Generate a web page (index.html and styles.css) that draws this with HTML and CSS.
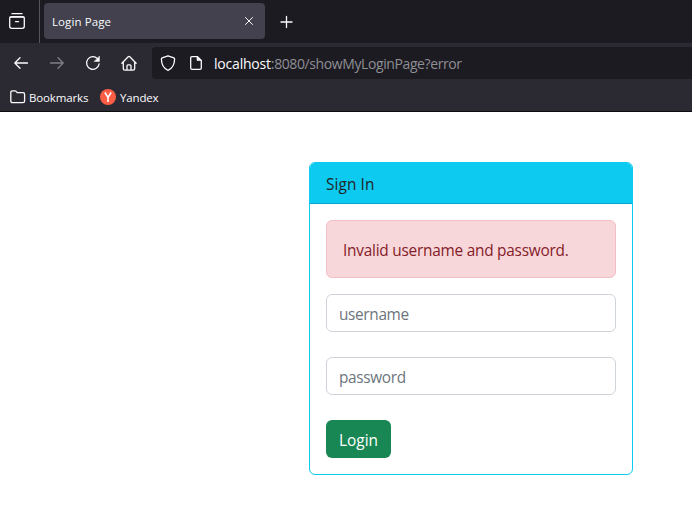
FILE: index.html
```html
<!DOCTYPE html>
<html lang="en">
<head>
<meta charset="utf-8">
<title>Login Page</title>
<link rel="stylesheet" href="styles.css">
</head>
<body>
<header class="browser">
  <div class="tabs">
    <div class="view">
      <svg class="icon" width="18" height="18" viewBox="0 0 18 18"><path d="M4 1.700h10"/><rect x="1.700" y="4.600" width="14.600" height="11.700" rx="2"/><path d="M2 5.200h14M7.500 9.600h3"/></svg>
    </div>
    <div class="tab"><span class="tab-title">Login Page</span>
      <svg class="icon thin" width="10" height="10" viewBox="0 0 10 10"><path d="M1.500 1.500l7 7M8.500 1.500l-7 7"/></svg>
    </div>
    <svg class="icon plus" width="14" height="14" viewBox="0 0 14 14"><path d="M6.500 1.500v11M1 7h11"/></svg>
  </div>
  <nav class="toolbar">
    <div class="buttons">
      <svg class="icon" width="16" height="16" viewBox="0 0 16 16"><path d="M14.500 8H1.800M7 2.800L1.800 8 7 13.200"/></svg>
      <svg class="icon dim" width="16" height="16" viewBox="0 0 16 16"><path d="M1.500 8h12.700M9 2.800L14.200 8 9 13.200"/></svg>
      <svg class="icon" width="16" height="16" viewBox="0 0 16 16"><path d="M12.400 3.600A6.300 6.300 0 1 0 14.100 9"/><path class="solid" d="M14.400 1.500v4.900H9.500z"/></svg>
      <svg class="icon" width="16" height="16" viewBox="0 0 16 16"><path d="M.9 8.200L7.200 1.700q.8-.7 1.600 0l6.300 6.500M2.300 7v6.400q0 1.700 1.700 1.700h8q1.700 0 1.700-1.700V7M6 15v-4.100q0-1 1-1h2q1 0 1 1V15"/></svg>
    </div>
    <div class="address">
      <svg class="icon" width="16" height="16" viewBox="0 0 16 16"><path d="M8 .8l5.900 2.100q.7.300.7 1.100C14.500 9.600 12.500 13.400 8 15.300 3.500 13.400 1.500 9.600 1.400 4q0-.8.700-1.100z"/></svg>
      <svg class="icon page" width="14" height="16" viewBox="0 0 14 16"><path d="M8.500 1.700H3q-1.300 0-1.300 1.300v10q0 1.300 1.300 1.300h8q1.300 0 1.300-1.300V5.500z"/><path class="solid" d="M8 1.500v4h4.200z"/></svg>
      <span class="url"><b>localhost</b>:8080/showMyLoginPage?error</span>
    </div>
  </nav>
  <div class="bookmarks">
    <svg class="icon folder" width="16" height="14" viewBox="0 0 16 14"><path d="M.8 11V2.500Q.8.800 2.500.800H5q.7 0 1.100.600L7.200 2.700H13Q14.600 2.700 14.600 4.400V11q0 1.700-1.600 1.700H2.500Q.8 12.700.8 11z"/></svg>
    <span class="mark-text first">Bookmarks</span>
    <svg width="16" height="16" viewBox="0 0 16 16"><circle cx="8" cy="8" r="8" fill="#fc5d45"/><path d="M4.900 3.500L8 8.500l3.100-5M8 8v5" fill="none" stroke="#fff" stroke-width="1.600"/></svg>
    <span class="mark-text second">Yandex</span>
  </div>
</header>
<main class="content">
  <section class="card">
    <div class="card-header"><span class="heading">Sign In</span></div>
    <form class="card-body">
      <div class="alert"><span class="message">Invalid username and password.</span></div>
      <input class="field user" type="text" placeholder="username">
      <input class="field pass" type="password" placeholder="password">
      <button class="login" type="button">Login</button>
    </form>
  </section>
</main>
</body>
</html>
```
FILE: styles.css
```css
* { box-sizing: border-box; }
body {
  margin: 0;
  height: 513px;
  overflow: hidden;
  background: #fff;
  font-family: "Open Sans", "Noto Sans", sans-serif;
}
svg { display: block; flex: none; }
.icon { fill: none; stroke: #fbfbfe; stroke-width: 1.3; stroke-linecap: round; stroke-linejoin: round; }
.icon .solid { fill: #fbfbfe; stroke-width: .6; }
.icon.thin { stroke-width: 1; }
.dim { opacity: .4; }
.browser { height: 112px; background: #2b2a33; border-bottom: 1px solid #0c0c0d; color: #fbfbfe; white-space: nowrap; }
.tabs { height: 43px; display: flex; background: #1c1b22; }
.view { width: 40px; height: 43px; padding: 12px 0 0 8px; border-right: 1px solid #55545c; }
.tab {
  width: 221px; height: 36px; margin: 3px 0 0 4px; padding: 0 11px 0 8px;
  display: flex; align-items: center; justify-content: space-between;
  background: #42414d; border-radius: 4px;
}
.tab-title { font-size: 11.5px; letter-spacing: .1px; }
.plus { margin: 15px 0 0 15px; }
.toolbar { height: 40px; display: flex; }
.buttons { width: 152px; padding: 12px 0 0 13px; display: flex; gap: 20px; }
.address { flex: 1; height: 32px; margin-top: 4px; padding-left: 8px; display: flex; align-items: center; background: #1c1b22; border-radius: 4px 0 0 4px; }
.page { margin-left: 13px; }
.url { margin: 0 0 0 11px; color: #8f8f94; font-size: 14px; letter-spacing: -.4px; }
.url b { color: #fbfbfe; font-weight: 400; letter-spacing: -.2px; }
.bookmarks { height: 28px; padding-left: 10px; display: flex; align-items: center; }
.mark-text { font-size: 11.5px; letter-spacing: -.15px; }
.first { width: 74px; padding-left: 3px; }
.second { padding-left: 4px; }
.content { padding: 50px 0 0 309px; }
.card { width: 324px; height: 313px; border: 1px solid #0dcaf0; border-radius: 6px; overflow: hidden; color: #212529; font-size: 15.4px; }
.card-header { height: 41px; padding: 2px 0 0 16px; display: flex; align-items: center; background: #0dcaf0; border-bottom: 1px solid #0ba4c7; }
.heading { letter-spacing: .1px; }
.card-body { padding: 16px; display: flex; flex-direction: column; align-items: flex-start; }
.alert { width: 290px; height: 58px; padding: 3px 16px 0; display: flex; align-items: center; background: #f8d7da; border: 1px solid #f1bfc5; border-radius: 6px; color: #842029; letter-spacing: -.24px; }
.field { width: 290px; height: 38px; margin: 0; padding: 3px 12px 0; border: 1px solid #ced4da; border-radius: 6px; background: #fff; font: inherit; letter-spacing: -.35px; }
.field::placeholder { color: #6c757d; opacity: 1; }
.user { margin-top: 16px; }
.pass { margin-top: 25px; }
.login { width: 65px; height: 38px; margin-top: 25px; padding: 3px 0 0; border: 0; border-radius: 6px; background: #198754; color: #fff; font: inherit; }
```
